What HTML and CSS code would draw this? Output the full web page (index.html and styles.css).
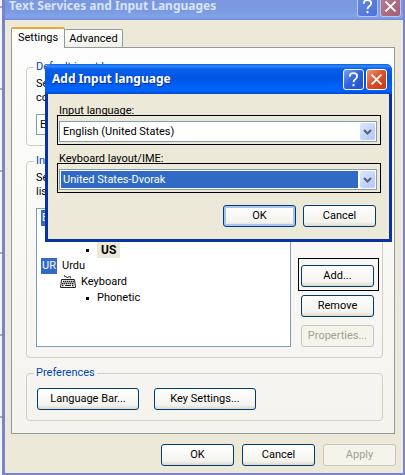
FILE: index.html
```
<!DOCTYPE html>
<html lang="en">
<head>
  <meta charset="UTF-8">
  <meta name="viewport" content="width=device-width, initial-scale=1.0">
  <title>Text Services and Input Languages</title>
  <link rel="stylesheet" href="styles.css">
</head>
<body>
  <main class="window">
    <header class="titlebar inactive">
      <h1>Text Services and Input Languages</h1>
      <button class="caption-btn help" aria-label="Help"><svg viewBox="0 0 21 21"><path d="M6.500 7.500V7q0-3.500 4-3.500t4 3.500q0 2-2 3.200t-2 3.300M10.500 15.500v2.500"/></svg></button>
      <button class="caption-btn close" aria-label="Close"><svg viewBox="0 0 21 21"><path d="M5 5l11 11M16 5L5 16"/></svg></button>
    </header>

    <nav class="tabs">
      <button class="tab active">Settings</button>
      <button class="tab">Advanced</button>
    </nav>

    <section class="panel">
      <fieldset>
        <legend>Default input language</legend>
        <label class="intro" for="default-language">Select one of the installed input languages to use when you start your<br>computer.</label>
        <div class="combo">
          <select id="default-language"><option>English (United States) - US</option></select>
        </div>
      </fieldset>

      <fieldset>
        <legend>Installed services</legend>
        <p class="intro">Select the services that you want for each input language shown in the<br>list. Use the Add and Remove buttons to modify this list.</p>
        <div class="services">
          <ul class="list">
            <li><span class="badge">EN</span>English (United States)</li>
            <li class="device">Keyboard</li>
            <li class="layout"><b>US</b></li>
            <li><span class="badge">UR</span>Urdu</li>
            <li class="device">
              <svg class="keyboard" viewBox="0 0 16 16">
                <path d="M4.500 1v1.500h2v1h2v-1h2v2" fill="none" stroke="#555"/>
                <path d="M1.500 5.500h13l1 8H.5z" fill="#fff" stroke="#222"/>
                <path d="M3 7.500h11M2 9.500h12M2 11.500h2M12 11.500h2" stroke="#222" stroke-width="1.500" stroke-dasharray="1.500 .5"/>
                <path d="M5 11.500h6" stroke="#222"/>
              </svg>
              Keyboard
            </li>
            <li class="layout">Phonetic</li>
          </ul>
          <div class="side-buttons">
            <span class="marked"><button class="btn">Add...</button></span>
            <button class="btn">Remove</button>
            <button class="btn" disabled>Properties...</button>
          </div>
        </div>
      </fieldset>

      <fieldset>
        <legend>Preferences</legend>
        <div class="preferences">
          <button class="btn wide">Language Bar...</button>
          <button class="btn wide">Key Settings...</button>
        </div>
      </fieldset>
    </section>

    <footer class="actions">
      <button class="btn">OK</button>
      <button class="btn">Cancel</button>
      <button class="btn" disabled>Apply</button>
    </footer>
  </main>

  <section class="dialog" role="dialog" aria-labelledby="dialog-title">
    <header class="titlebar">
      <h2 id="dialog-title">Add Input language</h2>
      <button class="caption-btn help" aria-label="Help"><svg viewBox="0 0 21 21"><path d="M6.500 7.500V7q0-3.500 4-3.500t4 3.500q0 2-2 3.200t-2 3.300M10.500 15.500v2.500"/></svg></button>
      <button class="caption-btn close" aria-label="Close"><svg viewBox="0 0 21 21"><path d="M5 5l11 11M16 5L5 16"/></svg></button>
    </header>
    <form class="dialog-body">
      <label for="input-language"><u>I</u>nput language:</label>
      <div class="combo marked">
        <select id="input-language"><option>English (United States)</option></select>
        <span class="arrow"><svg viewBox="0 0 15 17"><path d="M4 7l3.500 3.500L11 7"/></svg></span>
      </div>
      <label for="keyboard-layout"><u>K</u>eyboard layout/IME:</label>
      <div class="combo marked">
        <select id="keyboard-layout" class="selected"><option>United States-Dvorak</option></select>
        <span class="arrow"><svg viewBox="0 0 15 17"><path d="M4 7l3.500 3.500L11 7"/></svg></span>
      </div>
      <div class="dialog-actions">
        <button type="button" class="btn default">OK</button>
        <button type="button" class="btn">Cancel</button>
      </div>
    </form>
  </section>
</body>
</html>
```
FILE: styles.css
```
* {
  box-sizing: border-box;
}
body {
  margin: 0;
  overflow: hidden;
  background: repeating-linear-gradient(#f6f6fa 0 6px, #a9a9b0 6px 8px, #f6f6fa 8px 82px);
  color: #000;
  font: 11px/14px Roboto, "Liberation Sans", sans-serif;
}
button, select {
  font: inherit;
  color: inherit;
}
h1, h2, p, ul {
  margin: 0;
  padding: 0;
}

/* windows */
.window {
  margin: -10px 0 0 2px;
  min-height: calc(100vh + 10px);
  background: #ece9d8;
  border: solid #7b83cf;
  border-width: 0 2px 2px 3px;
}
.titlebar {
  display: flex;
  align-items: center;
  gap: 2px;
  height: 30px;
  padding: 0 5px 0 4px;
  background: linear-gradient(#0a5be0, #2f8cff 2px, #0a60ea 5px, #0054e3 14px, #0063fb 24px, #0062f8 27px, #0046d0);
  color: #fff;
}
.titlebar h1, .titlebar h2 {
  flex: 1;
  font: bold 12px/18px "Noto Sans", "Open Sans", sans-serif;
  white-space: nowrap;
  text-shadow: 1px 1px #0a2f8c;
}
.inactive {
  padding: 2px 2px 0 4px;
  background: linear-gradient(#7a96df, #7b9ae2 22px, #82a6ea 27px, #7686d8);
}
.titlebar.inactive h1 {
  color: #d8e4f8;
  text-shadow: none;
}
.caption-btn {
  width: 21px;
  height: 21px;
  padding: 0;
  border: 1px solid #fff;
  border-radius: 3px;
  background: linear-gradient(135deg, #7ba0f4, #2e62dc 50%, #2250c8);
}
.caption-btn svg {
  display: block;
  width: 19px;
  height: 19px;
  fill: none;
  stroke: #fff;
  stroke-width: 2;
}
.caption-btn.close {
  background: linear-gradient(135deg, #ee9479, #dc4f2a 50%, #c03a16);
}
.inactive .caption-btn {
  border-color: #b6c8f2;
  background: linear-gradient(135deg, #6688e0, #4a72d8);
}
.inactive .caption-btn.close {
  background: linear-gradient(135deg, #b77c94, #a35d72);
}

/* tabs */
.tabs {
  display: flex;
  align-items: flex-end;
  padding: 7px 6px 0;
}
.tab {
  height: 18px;
  padding: 0 4px;
  border: 1px solid #919b9c;
  border-width: 1px 1px 0 0;
  border-radius: 2px 2px 0 0;
  background: linear-gradient(#fff, #f0efe8);
}
.tab.active {
  height: 21px;
  margin-bottom: -1px;
  padding: 0 6px 2px;
  border-width: 2px 1px 0;
  border-top-color: #eba63a;
  background: #fdfdfd;
  z-index: 1;
}
.panel {
  margin: 0 8px 0 6px;
  padding: 12px 11px 12px 14px;
  border: 1px solid #919b9c;
  background: linear-gradient(#fdfdfe, #f4f3ee);
}
fieldset {
  margin: 0 0 8px;
  padding: 3px 8px 10px 9px;
  border: 1px solid #d0d0bf;
  border-radius: 4px;
  min-width: 0;
}
fieldset:last-child {
  margin: 0;
}
legend {
  margin-left: -2px;
  padding: 0 2px;
  color: #0046b0;
}
.intro {
  display: block;
  height: 28px;
  margin-bottom: 9px;
  white-space: nowrap;
}

/* services list */
.services {
  display: flex;
  align-items: flex-end;
  gap: 10px;
}
.list {
  flex: 1;
  height: 139px;
  padding: 1px 4px;
  border: 1px solid #7f9db9;
  background: #fff;
  list-style: none;
}
.list li {
  display: flex;
  align-items: center;
  gap: 5px;
  height: 16px;
}
.badge {
  width: 16px;
  line-height: 16px;
  background: #316ac5;
  color: #fff;
  text-align: center;
}
.list .device {
  padding-left: 19px;
}
.keyboard {
  width: 16px;
  height: 16px;
}
.list .layout {
  gap: 8px;
  padding-left: 45px;
}
.layout::before {
  content: "";
  width: 3px;
  height: 3px;
  background: #000;
}
.layout b {
  padding: 0 4px;
  background: #ece9d8;
  font-size: 12px;
  line-height: 16px;
}
.side-buttons {
  display: flex;
  flex-direction: column;
  gap: 8px;
}
.preferences {
  display: flex;
  gap: 15px;
  padding: 5px 1px 0;
}

/* buttons */
.btn {
  width: 73px;
  height: 22px;
  padding: 0;
  border: 1px solid #003c74;
  border-radius: 3px;
  background: linear-gradient(#fff, #f4f3ee 80%, #dcd8cc);
}
.btn.wide {
  width: 102px;
}
.btn.default {
  box-shadow: inset 0 0 0 2px #a9c4f0;
}
.btn:disabled {
  border-color: #c9c7ba;
  background: #f5f4ea;
  color: #a1a192;
}
.actions {
  display: flex;
  justify-content: flex-end;
  gap: 8px;
  padding: 10px 7px 7px;
}

/* black outline around a highlighted control */
.marked {
  display: block;
  position: relative;
}
.marked::after {
  content: "";
  position: absolute;
  inset: -7px -5px -4px -3px;
  border: 1px solid #000;
  pointer-events: none;
}
.marked .btn {
  display: block;
}

.combo {
  display: flex;
  height: 21px;
  padding: 1px;
  border: 1px solid #7f9db9;
  background: #fff;
}
.combo select {
  flex: 1;
  min-width: 0;
  margin-right: 2px;
  padding: 0 2px;
  border: 0;
  border-radius: 0;
  appearance: none;
  background: #fff;
}
.combo select.selected {
  background: #316ac5;
  color: #fff;
}
.arrow {
  width: 15px;
  height: 17px;
  border-radius: 2px;
  background: linear-gradient(135deg, #dce6fd, #b4c8f6);
}
.arrow svg {
  display: block;
  fill: none;
  stroke: #4d6185;
  stroke-width: 2;
}

/* dialog in front of the main window */
.dialog {
  position: absolute;
  top: 64px;
  left: 45px;
  right: 13px;
  border: solid #0831a8;
  border-width: 0 3px 3px;
  border-radius: 6px 6px 0 0;
  background: #ece9d8;
}
.dialog .titlebar {
  margin: 0 -3px;
  padding-left: 7px;
  border-radius: 6px 6px 0 0;
}
.dialog-body {
  padding: 10px 12px 12px 11px;
}
.dialog-body label {
  display: block;
  margin-bottom: 3px;
}
.dialog-body .combo {
  margin-bottom: 10px;
}
.dialog-body .dialog-actions {
  display: flex;
  justify-content: flex-end;
  gap: 7px;
  padding: 5px 1px 0 0;
}
```
